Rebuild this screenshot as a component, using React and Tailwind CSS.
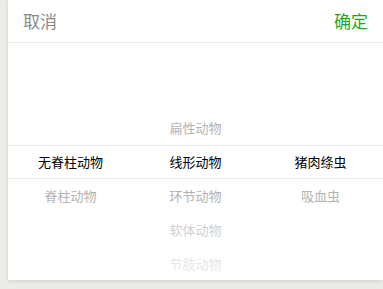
const FONT = { fontFamily: '"Noto Sans CJK SC", "Noto Sans", sans-serif' }

// 7 visible rows per column, index 3 is the selected one
const COLUMNS = [
  [null, null, null, "无脊柱动物", "脊柱动物", null, null],
  [null, null, "扁性动物", "线形动物", "环节动物", "软体动物", "节肢动物"],
  [null, null, null, "猪肉绦虫", "吸血虫", null, null],
]

const ROW_COLOR = [
  "text-[#e6e6e6]",
  "text-[#d0d0d0]",
  "text-[#b3b3b3]",
  "text-black",
  "text-[#b3b3b3]",
  "text-[#d0d0d0]",
  "text-[#e6e6e6]",
]

export default function App() {
  return (
    <div className="h-[289px] w-[383px] overflow-hidden bg-[#ebebe7] pl-2" style={FONT}>
      <div className="h-[280px] bg-white shadow-[0_1px_4px_rgba(0,0,0,0.12)]">
        <div className="flex h-[43px] items-center justify-between border-b border-[#eeeeee] px-[15px]">
          <span className="text-[17px] text-[#888888]">取消</span>
          <span className="text-[17px] text-[#1aad19]">确定</span>
        </div>

        <div className="relative grid grid-cols-3">
          <div className="pointer-events-none absolute inset-x-0 top-[102px] h-[34px] border-y border-[#eeeeee]" />
          {COLUMNS.map((col, ci) => (
            <div key={ci} className="flex flex-col">
              {col.map((item, ri) => (
                <div
                  key={ri}
                  className={`flex h-[34px] items-center justify-center text-[13px] ${ROW_COLOR[ri]}`}
                >
                  {item}
                </div>
              ))}
            </div>
          ))}
        </div>
      </div>
    </div>
  )
}
